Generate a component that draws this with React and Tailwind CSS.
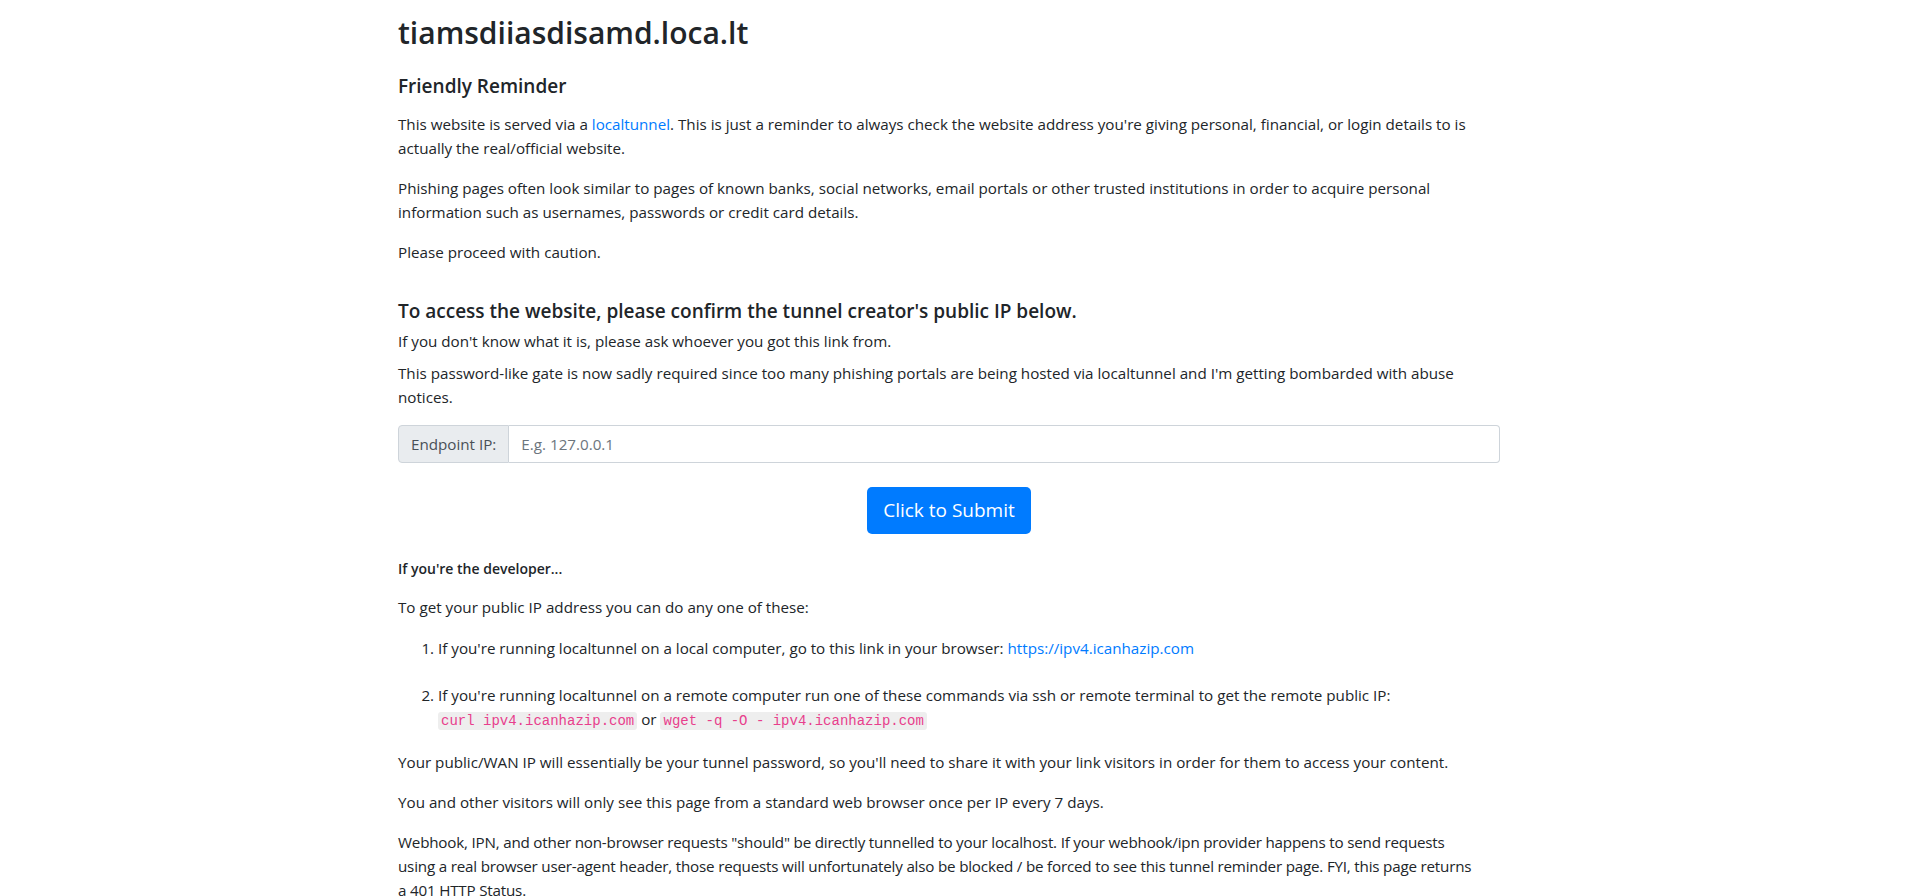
export default function App() {
  const code =
    "rounded-[3px] bg-[#eeeeee] px-[3px] py-[1px] font-['Liberation_Mono','Courier_New',monospace] text-[14px] text-[#e83e8c]";
  return (
    <div className="min-h-screen bg-white font-['Open_Sans','Noto_Sans',sans-serif] text-[15.2px] leading-6 text-[#212529]">
      <div className="ml-[398px] w-[1102px] pt-[14px]">
        <h1 className="mb-[22px] text-[30px] font-semibold leading-[38px]">tiamsdiiasdisamd.loca.lt</h1>
        <h5 className="mb-[14px] text-[19px] font-semibold leading-6">Friendly Reminder</h5>
        <p className="mb-4">
          This website is served via a{" "}
          <a href="#" className="text-[#007bff]">
            localtunnel
          </a>
          . This is just a reminder to always check the website address you're giving personal, financial, or login
          details to is actually the real/official website.
        </p>
        <p className="mb-4">
          Phishing pages often look similar to pages of known banks, social networks, email portals or other trusted
          institutions in order to acquire personal information such as usernames, passwords or credit card details.
        </p>
        <p className="mb-[35px]">Please proceed with caution.</p>

        <h5 className="mb-[6px] text-[19px] font-semibold leading-6">
          To access the website, please confirm the tunnel creator's public IP below.
        </h5>
        <p className="mb-2">If you don't know what it is, please ask whoever you got this link from.</p>
        <p className="mb-4">
          This password-like gate is now sadly required since too many phishing portals are being hosted via
          localtunnel and I'm getting bombarded with abuse notices.
        </p>

        <div className="flex h-[38px] w-full">
          <span className="flex items-center rounded-l-[4px] border border-[#ced4da] bg-[#e9ecef] px-3 text-[#495057]">
            Endpoint IP:
          </span>
          <input
            type="text"
            placeholder="E.g. 127.0.0.1"
            className="flex-1 rounded-r-[4px] border border-l-0 border-[#ced4da] bg-white px-3 text-[15.2px] text-[#495057] outline-none placeholder:text-[#6c757d]"
          />
        </div>

        <div className="mt-6 flex justify-center">
          <button className="h-[47px] rounded-[5px] bg-[#007bff] px-4 text-[19px] leading-[29px] text-white">
            Click to Submit
          </button>
        </div>

        <p className="mb-[14px] mt-[23px] text-[14px] font-semibold">If you're the developer...</p>
        <p className="mb-[17px]">To get your public IP address you can do any one of these:</p>
        <ol className="mb-[17px] list-decimal pl-10">
          <li className="mb-[23px]">
            If you're running localtunnel on a local computer, go to this link in your browser:{" "}
            <a href="#" className="text-[#007bff]">
              https://ipv4.icanhazip.com
            </a>
          </li>
          <li>
            If you're running localtunnel on a remote computer run one of these commands via ssh or remote terminal to
            get the remote public IP:
            <br />
            <code className={code}>curl ipv4.icanhazip.com</code> or{" "}
            <code className={code}>wget -q -O - ipv4.icanhazip.com</code>
          </li>
        </ol>
        <p className="mb-4">
          Your public/WAN IP will essentially be your tunnel password, so you'll need to share it with your link
          visitors in order for them to access your content.
        </p>
        <p className="mb-4">You and other visitors will only see this page from a standard web browser once per IP every 7 days.</p>
        <p className="mb-4 tracking-[-0.2px]">
          Webhook, IPN, and other non-browser requests "should" be directly tunnelled to your localhost. If your
          webhook/ipn provider happens to send requests
          <br />
          using a real browser user-agent header, those requests will unfortunately also be blocked / be forced to see
          this tunnel reminder page. FYI, this page returns
          <br />a 401 HTTP Status.
        </p>
      </div>
    </div>
  );
}
